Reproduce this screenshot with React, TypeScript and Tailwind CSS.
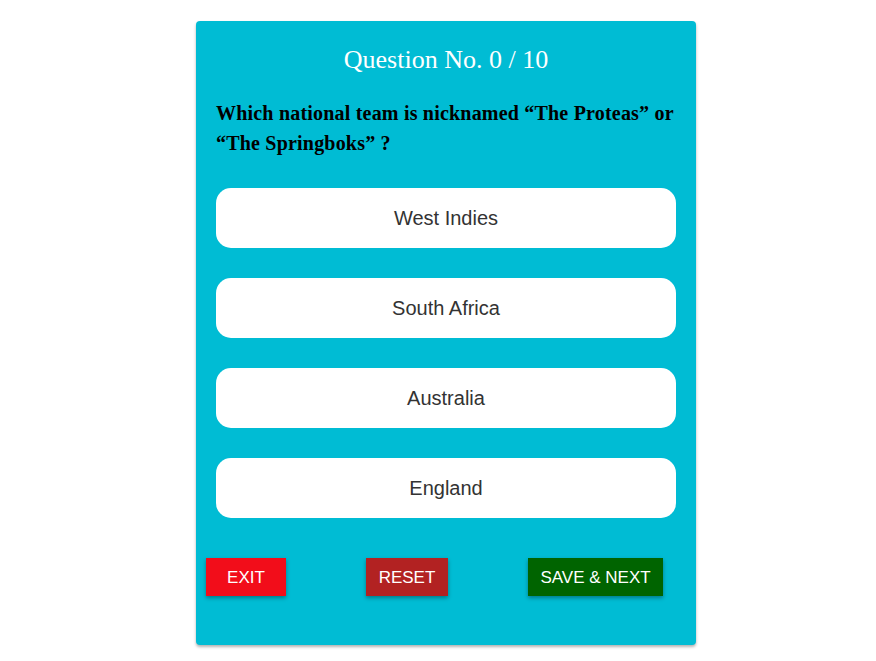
import React from "react";

const options = ["West Indies", "South Africa", "Australia", "England"];

export default function App() {
  return (
    <div className="min-h-screen bg-white pt-[21px] pl-[16px]">
      {/* quiz card */}
      <div className="mx-auto w-[500px] rounded-[4px] bg-[#00bcd4] pt-[24px] pb-[49px] shadow-[0_2px_3px_rgba(0,0,0,0.3)]">
        <h2 className="text-center font-['Liberation_Serif',serif] text-[26px] leading-[30px] text-white">
          Question No. 0 / 10
        </h2>
        <p className="mt-[23px] px-[20px] font-['Liberation_Serif',serif] text-[20px] font-bold leading-[30px] tracking-[0.2px] text-black">
          Which national team is nicknamed “The Proteas” or “The Springboks” ?
        </p>

        {/* options */}
        <div className="mt-[30px] flex flex-col gap-[30px] px-[20px]">
          {options.map((o) => (
            <button
              key={o}
              className="h-[60px] w-full rounded-[15px] bg-white text-center font-['Liberation_Sans',sans-serif] text-[20px] text-[#333333]"
            >
              {o}
            </button>
          ))}
        </div>

        {/* actions */}
        <div className="mt-[40px] flex gap-[80px] pl-[10px] font-['Liberation_Sans',sans-serif] text-[17px] text-white">
          <button className="h-[38px] w-[80px] bg-[#f20d1a] pt-[1px] shadow-[0_2px_4px_rgba(0,0,0,0.35)]">
            EXIT
          </button>
          <button className="h-[38px] w-[82px] bg-[#b22222] pt-[1px] shadow-[0_2px_4px_rgba(0,0,0,0.35)]">
            RESET
          </button>
          <button className="h-[38px] w-[135px] bg-[#006400] pt-[1px] shadow-[0_2px_4px_rgba(0,0,0,0.35)]">
            SAVE &amp; NEXT
          </button>
        </div>
      </div>
    </div>
  );
}
